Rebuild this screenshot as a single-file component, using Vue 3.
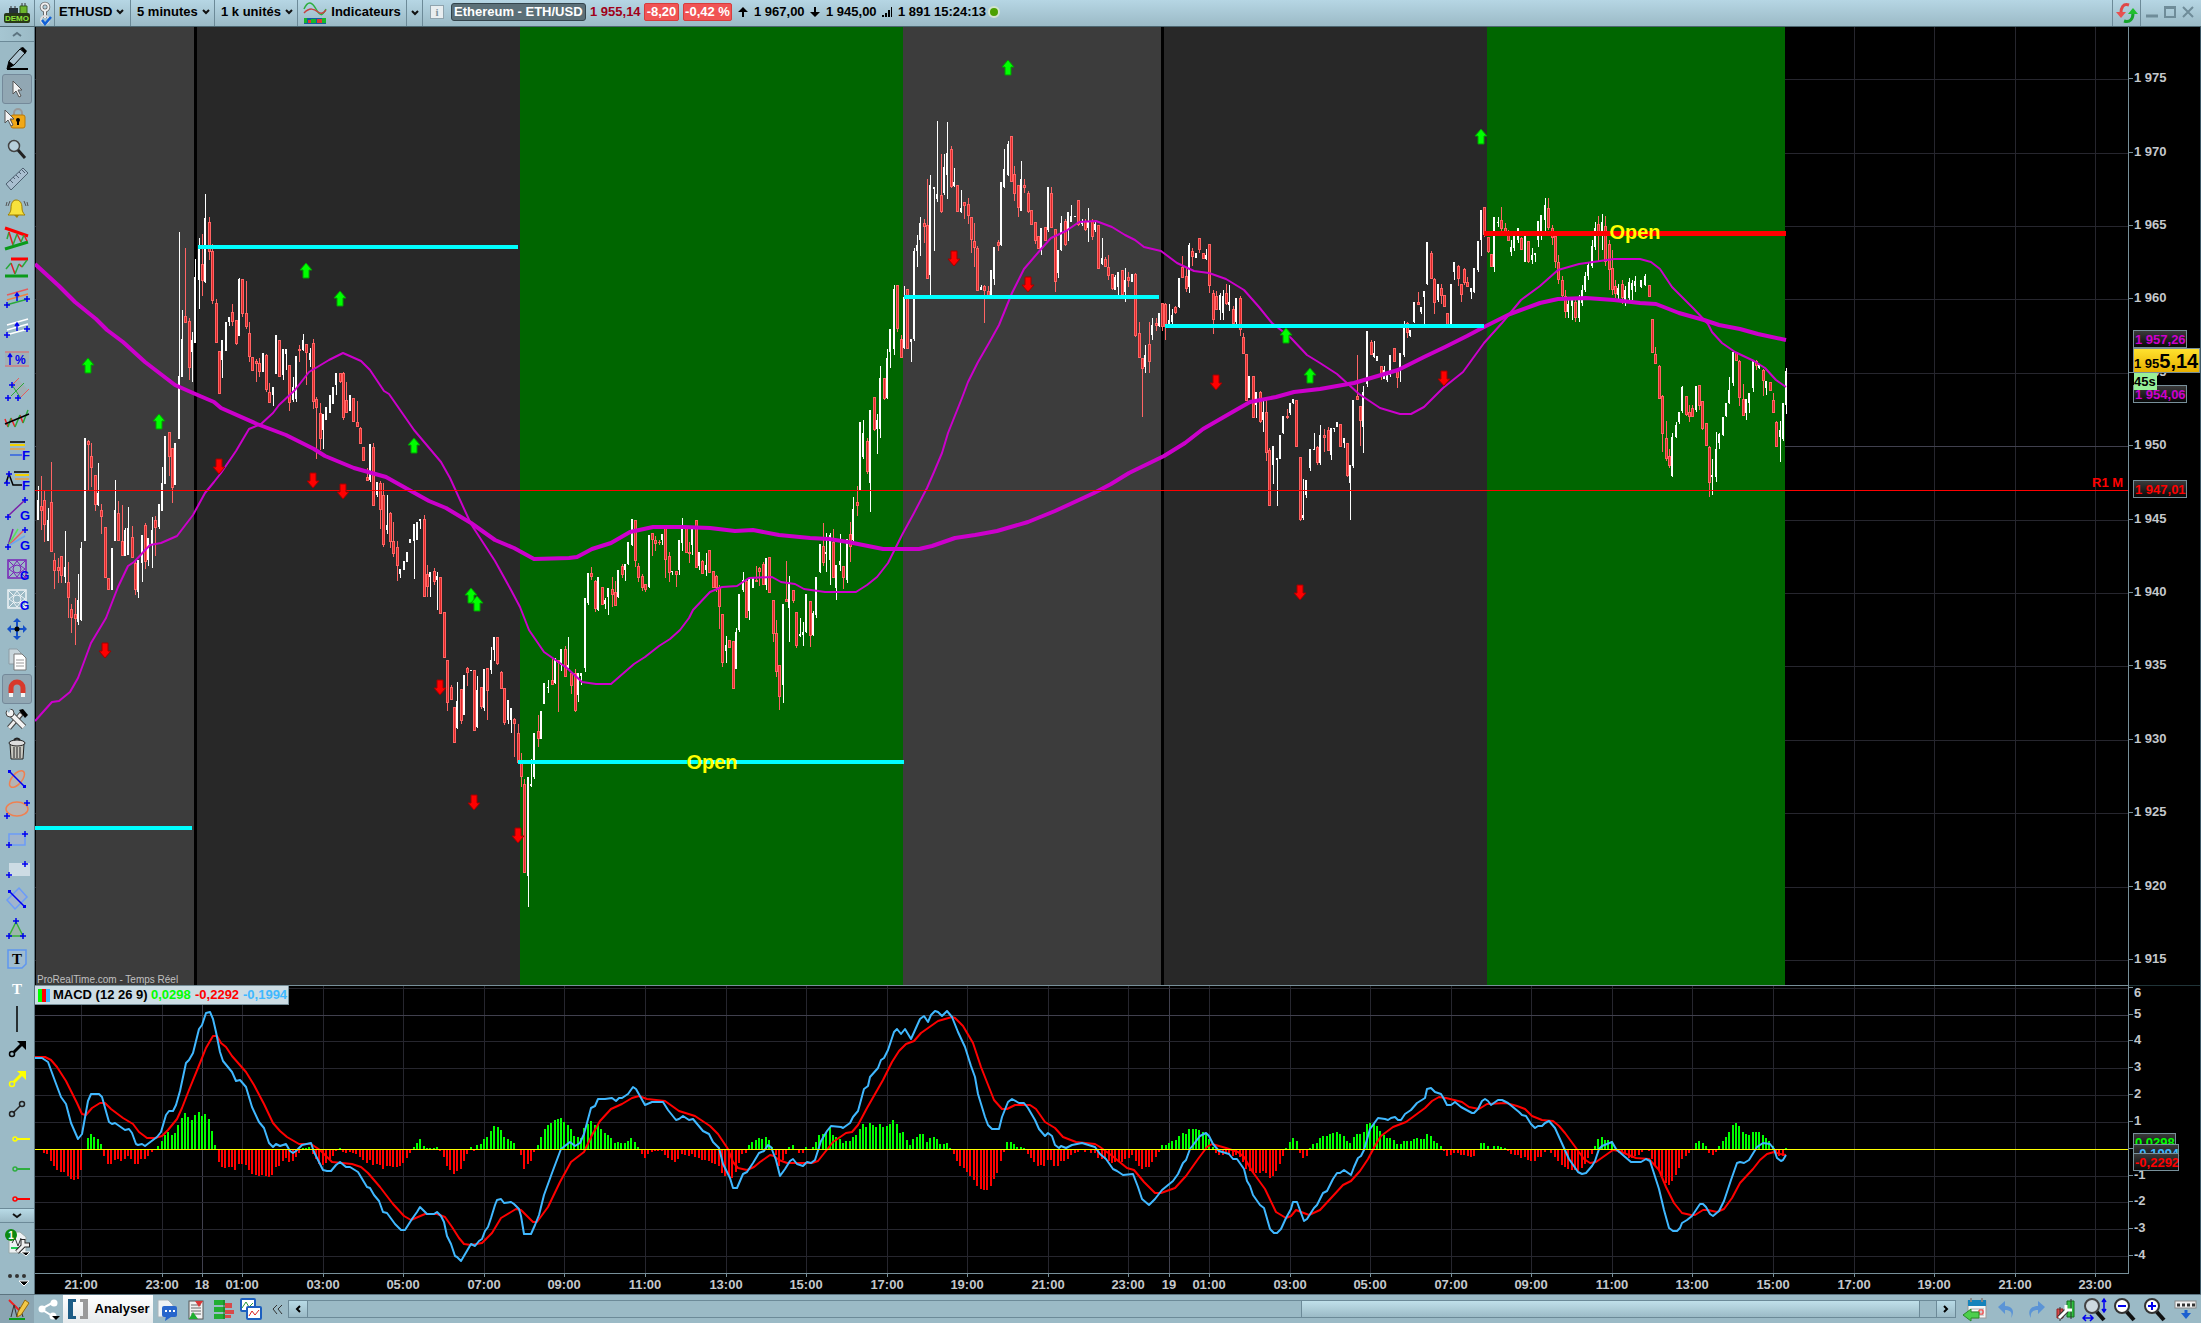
<script setup>
import { ref } from 'vue'

const symbol = ref('ETHUSD')
const timeframe = ref('5 minutes')
const units = ref('1 k unités')

/* ---------- drawing helpers for toolbar glyphs ---------- */
const plus = (x, y) => `<path d="M${x - 3} ${y}h6M${x} ${y - 3}v6" stroke="#0000f0" stroke-width="1.5"/>`
const line = (d, c = '#000', w = 1.5) => `<path d="${d}" stroke="${c}" stroke-width="${w}" fill="none"/>`
const letter = (t, x, y, c = '#0000f0', s = 13) =>
  `<text x="${x}" y="${y}" fill="${c}" font-size="${s}" font-weight="bold">${t}</text>`
const cursor = (x, y) =>
  `<path d="M${x} ${y}v13l3-3 3 6 2-1-3-6h4z" fill="#f4f4f4" stroke="#555"/>`
const gannBox = c =>
  `<rect x="5" y="5" width="18" height="18" fill="none" stroke="${c}" stroke-width="1.5"/>` +
  `<circle cx="14" cy="14" r="4" fill="none" stroke="${c}"/>` +
  `<path d="M6 6l5 5M22 6l-5 5M6 22l5-5M22 22l-5-5M14 6l-3 4M14 6l3 4M6 14l4-3M6 14l4 3M22 14l-4-3M22 14l-4 3M14 22l-3-4M14 22l3-4" stroke="${c}" fill="none"/>` +
  letter('G', 17, 25, '#0000f0', 12)
const hRay = c => `<circle cx="12" cy="14" r="2" fill="none" stroke="${c}" stroke-width="1.5"/>` + line('M14 14h13', c, 2)
const arrowTool = c =>
  `<circle cx="9" cy="19" r="2.5" fill="none" stroke="${c}" stroke-width="1.5"/>` +
  line('M11 17l8-8', c, 3) + `<path d="M14 6h9v9z" fill="${c}"/>`

const tools = [
  { name: 'Crayon', g: '<path d="M4 24l2-8L17 4l5 4L11 20z" fill="#a9c2cf" stroke="#000"/><path d="M4 24l2-8 5 4zM17 3l3-1 4 4-2 3z"/>' + line('M4 24h21', '#000', 2) },
  { name: 'Curseur', on: true, g: cursor(10, 6) },
  { name: 'Verrou', g: '<path d="M11 11V8a4 4 0 018 0v3" fill="none" stroke="#999" stroke-width="2"/><rect x="8" y="10" width="14" height="13" rx="2" fill="#f0a818" stroke="#b87808"/><circle cx="15" cy="15" r="2"/><path d="M14 15h2v5h-2z"/>' + cursor(2, 5) },
  { name: 'Loupe', g: '<circle cx="11" cy="11" r="5.5" fill="#b7d0dc" stroke="#444" stroke-width="1.5"/>' + line('M15 15l7 8', '#222', 3) },
  { name: 'Règle', g: '<path d="M3 19L20 3l5 5L8 25z" fill="#a9bfd0" stroke="#4d6070"/>' + line('M7 15l3 3M10 12l2 2M13 10l3 3M16 7l2 2M19 5l3 3', '#4d6070', 1) },
  { name: 'Alerte', g: '<path d="M13 5c4 0 6 3 6 8 0 3 1 5 3 7H5c2-2 3-4 3-7 0-5 2-8 5-8z" fill="#f7e23c" stroke="#a08000"/><path d="M11 20h5l-2 3z" fill="#a08000"/>' + line('M4 7L3 11M7 6L5 11M21 6l2 5M24 7l1 4', '#555', 1) },
  { name: 'Triangle', g: line('M2 3l23 8', '#f00', 3) + line('M2 24l23-7', '#0a9a1a', 3) + line('M4 14l2-7', '#2aa83a') + line('M6 7l4 13M14 9l4 8M21 10l3 6', '#d22') + line('M10 20l4-11M18 17l3-7', '#2aa83a') },
  { name: 'Canal prix', g: line('M8 4h17', '#f00', 3) + line('M2 21h23', '#0a9a1a', 3) + line('M8 8l4 11M16 9l3 3', '#d22') + line('M3 14l5-6M12 19l4-10M19 12l5-7', '#2aa83a') },
  { name: 'Canal haussier', g: line('M4 10l21-6', '#e65c5c') + line('M4 15l21-6', '#f08040') + line('M3 20l22-6', '#2aa83a') + line('M14 16V8M12 11l2-3 2 3', '#0000f0') + plus(4, 20) + plus(24, 14) },
  { name: 'Canal blanc', g: line('M4 10l21-6M4 15l21-6M3 20l22-6', '#fff', 1.5) + line('M14 16V8M12 11l2-3 2 3', '#0000f0') + plus(4, 20) + plus(24, 14) },
  { name: 'Variation', g: '<path d="M2 8h24v12H2z" fill="#a8a8a8" opacity=".5"/>' + line('M2 7h24M2 21h24', '#e65c5c', 1) + line('M7 20V9M5 12l2-3 2 3', '#0000f0') + letter('%', 12, 19, '#0000f0', 12) },
  { name: 'Fourchette', g: '<path d="M9 11l6-7 10 11-8 8z" fill="#a8a8a8" opacity=".5"/>' + line('M9 10l7-7M18 22l8-8', '#e65c5c', 1) + line('M8 21L21 8M9 10l8 12', '#2aa83a', 1) + plus(9, 10) + plus(5, 23) + plus(15, 23) },
  { name: 'Régression', g: line('M2 14l3 8M8 13l4 9M17 10l3 8', '#e22') + line('M5 22l3-9M12 22l5-12M20 18l5-13', '#2aa83a') + line('M2 19L26 9', '#000', 1.5) },
  { name: 'Retracements', g: line('M7 7h15') + line('M7 10h15', '#f0d000', 2) + line('M7 14h15', '#e8a040', 1.5) + line('M7 20h12', '#3060e0') + letter('F', 19, 25) },
  { name: 'Extensions', g: line('M11 7h15') + line('M12 10h14', '#f0d000', 2) + line('M12 14h14', '#e8a040', 1.5) + line('M3 18l3-9 4 11h9') + plus(6, 9) + plus(4, 18) + letter('F', 19, 25) },
  { name: 'Droite de Gann', g: line('M5 21L22 5', '#7a1fa8') + plus(22, 5) + plus(5, 22) + letter('G', 17, 25) },
  { name: 'Éventail', g: line('M5 21L10 4', '#7a1fa8') + line('M5 21L15 4', '#5adf5a') + line('M5 21L21 5', '#e65c5c') + line('M5 21l17-10', '#6aa8f0') + plus(22, 5) + plus(5, 22) + letter('G', 17, 25) },
  { name: 'Carré de Gann', g: gannBox('#7a22b8') },
  { name: 'Carré blanc', g: gannBox('#eef4f6') },
  { name: 'Déplacer', g: line('M14 6v16M6 14h16', '#1550c8', 2) + '<path d="M14 3l4 4h-8zM14 25l4-4h-8zM4 14l4-4v8zM24 14l-4-4v8z" fill="#1550c8"/><circle cx="14" cy="14" r="2.5"/>' },
  { name: 'Copier', g: '<path d="M6 4h8l4 4v11H6z" fill="#c9d6dc" stroke="#8c9ca4"/><path d="M11 9h8l4 4v12H11z" fill="#fff" stroke="#777"/>' + line('M13 15h8M13 18h8M13 21h8', '#999', 1) },
  { name: 'Aimant', on: true, g: '<path d="M8 18v-5a6 6 0 0112 0v5" fill="none" stroke="#d8392b" stroke-width="5"/>' + line('M8 18v4M20 18v4', '#f4f4f4', 4) },
  { name: 'Outils', g: line('M6 23L20 7', '#444', 5) + line('M6 23L18 9', '#eee', 3) + line('M8 9l13 13', '#444', 6) + line('M7 8l14 14', '#f2f2f2', 4) + '<path d="M16 5l4-1 5 6-3 3z"/><circle cx="7" cy="8" r="4" fill="#f2f2f2" stroke="#444"/><path d="M2 4l4 4 2-5z" fill="#9bb8c5"/>' },
  { name: 'Corbeille', g: '<path d="M7 9h14l-1 15H8z" fill="#c8c8c0" stroke="#222"/><ellipse cx="14" cy="8" rx="8" ry="3" fill="#ddd" stroke="#222"/><path d="M11 5q3-3 6 0" fill="none" stroke="#222" stroke-width="2"/>' + line('M11 12v11M14 12v11M17 12v11', '#555') },
  { name: 'Ellipse inclinée', g: '<ellipse cx="14" cy="14" rx="10" ry="5" transform="rotate(-50 14 14)" fill="#b4b4b4" stroke="#f08050" stroke-width="1.5"/>' + line('M7 7l14 14', '#0000f0') + '<path d="M5 5h3v3H5zM20 20h3v3h-3z" fill="#0000f0"/>' },
  { name: 'Ellipse', g: '<ellipse cx="14" cy="14" rx="11" ry="7" fill="#b4b4b4" stroke="#f08050" stroke-width="1.5"/>' + plus(24, 8) + plus(4, 21) },
  { name: 'Rectangle', g: '<rect x="6" y="9" width="16" height="11" fill="#a0b4cc" stroke="#6c9cf8" stroke-width="1.5"/>' + plus(22, 9) + plus(6, 20) },
  { name: 'Zone', g: '<rect x="6" y="8" width="21" height="13" fill="#cddce4"/>' + plus(22, 9) + plus(6, 20) },
  { name: 'Rectangle incliné', g: '<path d="M16 3l8 9-12 12-8-9z" fill="#a0b4cc" stroke="#6c9cf8" stroke-width="1.5"/>' + line('M7 7l14 14', '#0000f0') + '<path d="M5 5h3v3H5zM20 20h3v3h-3z" fill="#0000f0"/>' },
  { name: 'Forme', g: '<path d="M13 7l7 14H6z" fill="#9db5ad" stroke="#3ab03a" stroke-width="1.5"/>' + plus(13, 6) + plus(6, 21) + plus(20, 21) },
  { name: 'Note', g: '<path d="M5 5h18v14l-4 4H5z" fill="#9fbcd0" stroke="#5f96f0" stroke-width="1.5"/><text x="14" y="19" text-anchor="middle" font-family="Liberation Serif, serif" font-weight="bold" font-size="15">T</text>' },
  { name: 'Texte', g: '<text x="14" y="19" text-anchor="middle" fill="#fff" font-family="Liberation Serif, serif" font-weight="bold" font-size="15">T</text>' },
  { name: 'Verticale', g: line('M14 1v26') },
  { name: 'Flèche', g: arrowTool('#000') },
  { name: 'Flèche jaune', g: arrowTool('#ff0') },
  { name: 'Segment', g: line('M10 18l7-7', '#222') + '<circle cx="9" cy="19" r="2.5" fill="none" stroke="#222" stroke-width="1.5"/><circle cx="19" cy="9" r="2.5" fill="none" stroke="#222" stroke-width="1.5"/>' },
  { name: 'Horizontale jaune', g: hRay('#ff0') },
  { name: 'Horizontale verte', g: hRay('#2fae3f') },
  { name: 'Horizontale rouge', g: hRay('#f00') }
]

const demoIcon = '<path d="M8 7h9v6H8z" fill="#26323a"/><path d="M19 5h7v8h-7z" fill="#6cb52c" stroke="#33601a"/><path d="M10 5v3M14 5v3M21 2v3M24 2v3" stroke="#333"/><rect x="3" y="12" width="26" height="10" rx="2" fill="#283818"/><text x="16" y="20" text-anchor="middle" font-size="8" font-weight="bold" fill="#8ee33c">DEMO</text>'
const linkIcon = '<circle cx="9" cy="7" r="3.5" fill="none" stroke="#666" stroke-width="3.5"/><path d="M9 10v8" stroke="#666" stroke-width="4"/><circle cx="9" cy="7" r="3.5" fill="none" stroke="#f0f0f0" stroke-width="2"/><path d="M9 10v8" stroke="#f0f0f0" stroke-width="2"/><circle cx="9" cy="20" r="4" fill="none" stroke="#ddd" stroke-width="2"/><path d="M6 20l3 4 6-7" fill="none" stroke="#1060d8" stroke-width="2.5"/>'
const indicatorIcon = '<path d="M1 8C5-1 9 1 13 8s6 8 10 0" fill="none" stroke="#2fae3f" stroke-width="1.5"/><path d="M1 12c6-6 10-4 14-1s6 0 8-2" fill="none" stroke="#c84040" stroke-width="1.5"/><path d="M1 17h22v6H1z" fill="#1260a0"/><path d="M1 17h3v5H1zM8 18h5v4H8zM19 17h4v5h-4z" fill="#18b828"/><path d="M5 19h3v3H5zM14 18h5v4h-5z" fill="#e03838"/>'
const swapIcon = '<path d="M14 4C8 2 6 7 6 12" fill="none" stroke="#e04848" stroke-width="3"/><path d="M1 11h10l-5 6z" fill="#e85050"/><path d="M9 20c6 2 9-2 9-8" fill="none" stroke="#16a42c" stroke-width="3"/><path d="M13 13h10l-5-6z" fill="#1fbf2f"/>'

const bottomLeft = [
  { name: 'Graphique', w: 34, cls: 'pressed', g: '<path d="M6 3l12 12" stroke="#e22" stroke-width="2"/><path d="M8 20l3-12 3 12 3-10 3 10" stroke="#333" fill="none"/><path d="M6 22h16" stroke="#0a9a1a" stroke-width="2"/><path d="M15 15L22 3l4 3-8 12-4 2z" fill="#f2c848" stroke="#94690c"/>' },
  { name: 'Partager', w: 29, cls: '', g: '<path d="M19 5L6 12l13 8" fill="none" stroke="#fff" stroke-width="2"/><circle cx="19" cy="6" r="3.5" fill="#fff"/><circle cx="7" cy="12" r="3.5" fill="#fff"/><circle cx="18" cy="19" r="3.5" fill="#fff"/><path d="M17 19h8l-4 4z"/>' }
]
const bottomMid = [
  { name: 'Messages', w: 30, g: '<path d="M4 3h10l5 5v12H4z" fill="#eef2f4" stroke="#a8b4ba"/><rect x="8" y="9" width="15" height="11" rx="2" fill="#2866cc"/><path d="M12 19l-1 5 6-4z" fill="#2866cc"/><path d="M11 14h2M15 14h2M19 14h2" stroke="#fff" stroke-width="2"/>' },
  { name: 'Liste', w: 27, g: '<rect x="6" y="4" width="14" height="18" fill="#f2f2f2" stroke="#555"/><path d="M8 8h10M8 11h10M8 14h10M8 17h10" stroke="#666"/><path d="M12 4h8l-4 6z" fill="#d83838"/><path d="M6 22l4-7 5 7z" fill="#1fae2f"/>' },
  { name: 'Carnet', w: 28, g: '<path d="M4 3h11v5H4zM4 10h11v5H4zM4 17h11v5H4z" fill="#22ae32"/><path d="M15 6h7v5h-7zM15 13h9v4h-9zM15 18h6v3h-6z" fill="#d84a4a"/><path d="M14 3v19" stroke="#1c7024"/>' },
  { name: 'Graphiques', w: 28, g: '<rect x="3" y="2" width="14" height="12" rx="1" fill="#fff" stroke="#1c5fc0" stroke-width="2"/><path d="M4 11l4-6 3 5 4-4" stroke="#2a9a3a" fill="none"/><rect x="9" y="10" width="14" height="12" rx="1" fill="#fff" stroke="#1c5fc0" stroke-width="2"/><path d="M11 19l3-5 3 4 4-5" stroke="#d22" fill="none"/>' }
]
const lens = '<path d="M14 14l8 9" stroke="#111" stroke-width="4"/><circle cx="10" cy="9" r="7" fill="#fff" stroke="#333" stroke-width="2"/>'
const bottomRight = [
  { name: 'Calendrier', g: '<rect x="6" y="4" width="18" height="17" fill="#f7f7f7" stroke="#999"/><rect x="6" y="3" width="18" height="6" fill="#1583bb"/><path d="M9 1v4M20 1v4" stroke="#888" stroke-width="2"/><path d="M9 12h13M9 15h13M9 18h13" stroke="#aaa"/><path d="M17 13h4v4h-4z" fill="none" stroke="#e22"/><path d="M1 18l8-6v3h8v6H9v3z" fill="#4ccf4c" stroke="#2a8a2a"/>' },
  { name: 'Annuler', g: '<path d="M13 4v5c8 0 10 6 6 12 2-6-1-8-6-8v4L6 10z" fill="#5b94d6"/>' },
  { name: 'Rétablir', g: '<path d="M16 4v5C8 9 5 15 9 21c-1-6 2-8 7-8v4l7-7z" fill="#5b94d6"/>' },
  { name: 'Réglages', g: '<path d="M5 12h6v9H5z" fill="#d84848" stroke="#902020"/><path d="M15 4h7v16h-7z" fill="#30c040" stroke="#14701c"/><path d="M8 10v14M19 2v20" stroke="#333"/><path d="M7 21l8-8" stroke="#333" stroke-width="5"/><path d="M7 21l8-8M14 8v5h6" stroke="#fff" stroke-width="3" fill="none"/>' },
  { name: 'Zoom auto', g: '<path d="M14 14l8 9" stroke="#111" stroke-width="4"/><circle cx="10" cy="9" r="7" fill="#ccd8de" stroke="#444" stroke-width="2"/><path d="M22 3v11M20 5l2-3 2 3M20 12l2 3 2-3M1 21h10M4 18l-3 3 3 3M8 18l3 3-3 3" stroke="#0000f0" fill="none" stroke-width="1.5"/>' },
  { name: 'Zoom arrière', g: lens + '<path d="M6 9h8" stroke="#0000f0" stroke-width="2"/>' },
  { name: 'Zoom avant', g: lens + '<path d="M6 9h8M10 5v8" stroke="#0000f0" stroke-width="2"/>' },
  { name: 'Clavier', g: '<rect x="3" y="4" width="21" height="7" fill="#f2f2f2" stroke="#888"/><path d="M5 8h3M10 8h3M15 8h3M20 8h3" stroke="#333" stroke-width="3"/><path d="M14 13v4" stroke="#1c5fd0" stroke-width="3"/><path d="M9 16h10l-5 6z" fill="#1c5fd0"/>' }
]

/* ---------- chart data ---------- */
const sessions = [
  [36, 158, '#3c3c3c'], [197, 323, '#282828'], [520, 383, '#006600'],
  [903, 258, '#3c3c3c'], [1164, 323, '#282828'], [1487, 298, '#006600']
]

const prices = Array.from({ length: 13 }, (_, i) => ({ v: 1975 - 5 * i, y: Math.floor(79.7 + 73.4 * i) }))
const priceLabel = v => `1 ${v - 1000}`
const macdScale = Array.from({ length: 11 }, (_, i) => ({ v: 6 - i, y: Math.floor(988.2 + 26.84 * i) }))
const hours = Array.from({ length: 26 }, (_, i) => ({
  t: String((21 + 2 * i) % 24).padStart(2, '0') + ':00',
  x: Math.floor(81.5 + 80.57 * i)
}))
const days = [{ t: '18', x: 202 }, { t: '19', x: 1169 }]
const times = [...hours, ...days]

const levels = [
  [198, 518, 247], [35, 192, 828], [518, 904, 762], [904, 1159, 297], [1165, 1484, 326]
]

/* colour+x, high, body top, body bottom, low */
const candleData = `
w38 486 500 520 520,r41 476 506 511 530,r44 491 500 525 542,w48 508 520 541 541,r51 462 502 552 552,r54 553 560 571 589,
r58 558 567 571 583,r61 556 556 576 583,w65 531 567 577 583,r68 562 582 598 618,r71 604 609 618 633,r75 598 614 619 645,
w78 574 600 622 625,w81 542 548 620 621,w85 438 438 541 541,r88 440 441 445 490,r91 443 456 468 487,r95 475 475 505 511,
w98 463 493 505 506,r101 504 510 517 534,r105 527 527 578 578,r108 578 578 590 590,w112 548 548 590 590,w115 480 510 541 541,
r118 501 513 541 541,r122 505 541 556 556,w125 528 530 556 556,w128 507 528 555 555,r132 526 537 558 558,r135 560 563 590 595,
w138 560 560 592 598,w142 535 535 563 582,r145 523 525 562 569,w148 538 538 560 566,w152 517 530 545 568,r155 516 520 528 556,
w159 504 504 527 529,w162 467 483 511 511,w165 436 436 484 484,r169 432 432 457 476,r172 448 448 488 503,w175 443 443 485 485,
w179 232 376 439 439,w182 310 339 377 377,r185 248 316 323 323,r189 318 321 368 380,w192 332 340 352 382,w195 259 277 343 343,
w199 238 247 280 309,r202 234 264 281 296,w205 194 218 282 283,r209 217 222 252 260,r212 244 251 301 304,r216 299 303 343 343,
r219 351 351 394 394,w222 340 340 360 378,w226 322 322 351 351,w229 317 317 322 326,r232 304 312 322 326,r236 320 320 344 345,
w239 278 279 336 336,r242 279 279 314 317,r246 281 313 327 329,r249 322 333 357 362,r252 357 357 371 371,r256 359 361 364 382,
r259 358 363 372 377,w263 353 353 372 372,r266 354 355 390 392,r269 383 392 403 403,w273 387 387 395 406,w276 335 335 374 374,
r279 340 340 377 377,w283 349 349 375 380,w286 349 349 354 370,r289 365 365 403 411,w293 377 387 400 402,w296 356 356 399 402,
r299 345 349 351 362,w303 334 340 350 351,r306 344 344 353 385,w310 348 353 360 367,r313 339 343 402 409,r316 397 399 408 459,
r320 403 413 439 450,w323 414 414 430 449,w326 407 407 420 420,w330 395 395 413 413,w333 387 387 404 404,w336 373 373 385 395,
r340 373 373 382 383,r343 372 373 418 420,r346 382 400 413 413,w350 395 395 411 411,r353 398 398 422 422,r357 401 422 427 427,
r360 427 428 444 444,r363 447 447 461 461,r367 468 477 481 481,w370 444 444 480 482,r373 443 447 506 506,w377 482 482 495 497,
r380 481 483 510 529,r383 483 495 545 547,w387 495 525 530 534,r390 512 513 542 548,r393 522 541 554 557,r397 541 547 566 581,
w400 569 569 574 578,w404 561 561 570 570,w407 552 552 562 562,w410 539 539 543 543,w414 524 524 541 579,w417 522 522 540 540,
w420 519 519 521 529,r424 515 519 597 597,r427 565 574 587 597,w430 572 572 577 597,r434 568 571 582 585,w437 572 576 580 610,
r440 577 577 614 614,r444 612 612 658 658,r447 660 660 703 711,r451 685 687 700 700,r454 707 707 743 743,w457 682 701 728 729,
r461 689 689 721 724,w464 675 675 715 715,r467 667 668 673 686,w471 670 670 671 671,r474 670 670 731 731,w477 676 690 727 728,
r481 687 687 707 709,w484 669 669 708 711,r487 668 668 691 720,w491 647 660 670 674,w494 637 637 650 661,r497 637 637 664 665,
r501 671 672 689 689,r504 688 688 723 725,w508 700 700 720 724,w511 708 708 720 733,r514 718 719 724 757,r518 724 733 763 763,
r521 753 762 777 787,r524 779 784 873 873,w528 777 777 876 907,w531 759 784 786 787,w534 733 733 777 779,r538 715 731 739 747,
w541 711 711 739 739,w544 683 683 704 704,w548 680 687 688 693,r552 658 680 685 685,w555 658 660 683 684,r558 660 660 663 712,
w561 649 649 665 671,r565 646 649 677 677,w568 637 665 668 668,r571 672 673 686 694,r575 669 673 711 712,w578 673 673 695 702,
w581 673 673 676 685,w585 598 598 668 672,w588 573 573 603 605,r591 567 573 577 580,r595 580 581 609 612,w598 577 577 610 611,
r602 587 587 605 605,w605 598 600 604 609,w608 588 588 597 615,r612 577 589 595 607,r615 581 592 606 606,w618 570 570 597 598,
r622 564 566 575 578,w625 564 564 570 581,w628 542 542 564 565,w632 519 519 545 546,r635 520 520 561 567,r638 563 566 578 582,
r642 574 576 588 591,r645 584 584 590 592,w649 535 535 587 588,r652 533 533 540 556,r655 536 540 544 551,r659 540 542 543 545,
w662 534 534 540 545,r665 528 528 560 578,r669 552 556 573 582,w672 571 571 572 575,r676 571 571 575 587,w679 540 540 570 575,
w682 518 528 543 551,r686 528 528 553 553,r689 542 552 554 563,w692 527 527 545 555,r696 520 520 568 568,w699 552 552 566 570,
r702 560 561 574 574,w706 553 565 570 576,r709 550 550 573 573,r713 571 571 588 588,r716 575 576 588 592,r719 585 587 607 629,
r722 614 614 663 667,w726 636 645 651 663,r729 640 640 648 648,r733 641 641 689 689,w736 628 632 669 669,w739 594 594 630 632,
w743 572 580 590 592,r746 580 581 618 618,w749 579 579 611 620,w753 577 577 588 588,r756 566 580 582 582,r759 567 568 572 586,
r763 562 564 585 585,w766 558 558 585 590,r769 557 557 593 593,r773 600 600 634 642,r776 620 633 672 677,r779 665 665 697 710,
w783 604 604 685 703,r786 561 599 602 602,w789 576 583 608 642,r793 590 590 601 603,r796 612 612 646 648,w800 618 634 636 637,
w803 622 632 635 646,w806 594 594 632 633,r810 601 601 636 647,w813 611 613 635 636,w816 577 577 615 618,w820 544 544 572 573,
r823 523 546 563 566,w826 533 552 554 572,w830 533 535 560 585,r833 529 542 578 578,w836 565 565 588 600,w840 534 561 565 571,
r843 566 566 578 589,w847 539 539 580 583,r850 522 534 547 562,w853 497 509 540 541,r857 486 502 506 516,w860 422 422 490 490,
w863 420 433 457 459,r867 438 441 472 474,w870 410 410 483 512,r874 397 397 430 431,w877 414 420 429 454,w880 366 378 429 438,
r884 378 378 399 400,w887 349 358 398 399,w890 329 329 352 368,w894 285 289 349 355,r897 285 285 329 332,r901 335 339 358 358,
w904 286 297 348 349,r907 289 289 349 349,w911 339 339 342 362,w914 248 251 339 341,w917 235 245 251 267,w920 217 223 240 256,
r924 219 223 227 243,r927 179 225 279 279,w930 175 185 275 295,w934 187 187 189 251,w937 121 194 199 202,r941 154 195 212 213,
w944 154 167 193 195,w947 122 153 175 199,r951 146 149 187 188,w954 168 182 186 187,r957 185 185 212 212,w961 190 208 212 213,
r964 202 202 206 219,r968 198 204 216 224,r971 217 217 240 253,r974 223 241 248 267,r977 246 248 291 291,w981 285 287 290 290,
r984 285 286 291 323,r988 286 291 299 299,w991 270 270 295 297,w994 247 247 279 285,r998 240 242 246 251,w1001 182 182 245 246,
w1004 149 169 187 188,w1008 141 144 175 176,r1011 136 136 182 182,r1014 166 174 194 201,r1018 185 185 208 217,w1021 161 179 211 211,
r1024 179 185 188 193,r1028 191 193 212 213,r1031 210 210 225 225,r1035 222 222 241 244,r1038 236 236 249 249,w1041 228 228 250 255,
r1045 227 227 241 241,w1048 187 187 230 232,r1051 187 193 228 228,r1055 229 229 282 292,w1058 250 250 273 278,w1061 216 223 250 251,
r1065 219 221 245 246,w1068 212 212 230 241,w1071 205 216 222 222,w1075 216 216 217 217,r1078 200 200 225 226,w1082 219 222 224 226,
r1085 219 221 230 231,w1088 208 221 228 242,r1092 219 221 237 240,w1095 221 224 230 232,r1098 225 225 269 269,w1102 238 258 264 265,
r1105 257 259 267 267,r1108 255 267 276 280,r1112 274 274 289 290,w1115 275 277 290 290,w1118 272 272 287 295,r1122 270 270 295 296,
w1125 268 280 292 302,r1128 272 277 281 287,w1132 274 274 282 282,r1135 273 274 336 337,r1139 322 333 358 358,r1142 358 358 369 417,
w1145 345 355 367 373,r1149 322 344 362 373,w1152 318 325 335 340,r1156 318 323 326 331,w1159 313 313 326 327,r1162 303 303 327 331,
r1165 303 304 327 340,w1169 304 320 325 325,w1172 309 315 322 325,r1175 306 307 313 314,w1179 278 278 307 308,r1182 256 267 278 278,
r1186 267 276 289 292,w1189 243 245 287 293,r1192 248 251 257 266,w1196 253 253 258 258,r1199 238 238 250 253,r1203 253 253 259 259,
w1206 249 255 259 260,r1209 244 244 286 293,r1213 290 293 320 334,r1216 291 296 310 310,w1220 293 295 310 320,w1223 290 296 313 320,
r1226 284 293 304 305,w1229 285 302 305 311,r1233 306 309 324 324,w1236 298 298 322 327,r1240 296 298 330 336,r1243 333 337 354 354,
r1246 354 354 401 401,w1249 376 376 398 398,r1253 376 376 418 418,w1256 392 392 405 418,r1260 391 392 422 423,w1263 400 412 420 432,
r1266 400 412 453 461,r1269 448 450 506 506,w1273 446 446 465 484,w1277 458 458 460 506,w1280 435 435 459 459,w1283 416 416 433 434,
r1287 409 416 418 419,w1290 403 403 413 415,w1293 399 399 403 404,r1296 400 400 447 447,r1300 457 457 520 521,w1303 479 515 518 520,
w1306 480 480 495 498,w1310 449 449 468 471,w1314 433 449 450 450,r1317 446 447 463 465,w1320 425 435 463 465,r1324 429 435 438 452,
r1328 427 430 451 451,w1331 428 428 455 460,w1334 428 428 429 432,w1337 422 422 427 427,r1340 424 424 447 447,w1344 438 438 443 448,
r1347 443 443 476 477,w1350 465 465 483 520,w1353 400 400 466 468,r1357 355 396 400 400,r1360 406 406 421 446,w1363 386 392 427 453,
w1367 331 331 384 387,r1371 340 342 355 355,w1374 341 353 357 358,w1377 356 356 361 361,r1381 366 366 374 380,w1384 366 370 379 379,
w1387 373 373 380 382,w1390 355 355 375 377,r1394 348 348 362 362,r1397 371 371 378 388,w1400 353 353 370 382,w1404 321 325 355 357,
r1407 322 323 333 338,w1410 330 330 336 337,w1414 302 302 322 323,r1418 292 302 305 305,w1421 307 307 312 314,w1424 291 291 297 325,
w1427 242 242 284 285,r1431 251 253 279 279,r1434 278 279 303 314,w1438 284 284 300 302,r1441 284 288 296 304,r1444 295 295 307 307,
r1447 313 313 325 325,w1451 284 284 325 325,w1454 262 262 272 280,r1458 265 266 279 286,r1461 284 284 295 302,r1464 268 269 283 285,
r1467 277 282 287 287,w1471 288 288 292 299,w1474 268 268 292 293,w1478 241 241 270 272,w1481 210 210 240 256,r1484 207 207 235 237,
r1488 237 237 252 253,r1491 254 254 267 267,w1494 217 217 267 272,w1498 217 222 223 227,r1501 207 220 229 232,r1505 223 228 232 232,
r1508 230 231 241 241,w1511 240 247 252 256,w1514 236 236 248 251,w1518 228 228 240 243,r1521 237 238 250 250,w1525 234 234 262 262,
r1528 241 241 262 263,w1532 248 255 260 264,w1535 253 253 255 262,w1538 221 221 240 247,w1541 215 215 235 240,w1545 198 205 220 232,
r1548 198 208 228 230,r1552 225 228 238 245,r1555 234 236 262 268,r1558 255 262 280 284,r1562 276 280 296 300,r1565 290 296 312 318,
w1568 300 304 312 318,w1572 298 300 306 320,r1575 298 302 318 322,w1579 295 300 318 322,w1582 285 290 303 306,w1585 272 276 290 292,
w1588 262 265 276 280,w1592 240 246 266 268,w1595 222 228 247 250,r1598 216 224 236 262,w1602 214 222 236 250,r1605 216 226 262 266,
r1609 240 244 270 290,r1612 250 268 290 295,r1615 280 286 294 298,w1618 284 288 295 302,r1622 280 284 298 304,w1625 286 290 300 306,
w1629 278 282 298 302,w1632 280 283 290 300,w1635 276 281 286 292,w1641 280 280 287 288,w1645 274 276 285 286,r1649 285 285 297 297,
r1652 319 319 353 353,r1655 347 354 364 364,r1659 365 366 399 399,r1662 395 396 434 452,r1666 421 438 459 461,r1669 449 456 466 468,
w1672 433 437 476 477,w1676 422 425 437 438,w1679 412 412 422 424,w1682 386 387 411 413,r1686 396 396 415 416,r1689 405 412 417 422,
r1692 405 408 417 417,w1696 386 386 410 412,r1699 385 385 406 410,r1702 401 401 429 430,r1706 423 423 446 446,r1709 446 447 483 497,
w1712 459 475 477 495,w1716 432 449 477 482,w1719 433 434 443 449,w1723 417 417 435 436,w1726 403 403 416 417,w1729 377 390 403 404,
w1733 352 352 383 386,r1736 352 352 361 361,r1739 360 361 398 406,r1743 384 399 416 416,w1746 399 399 413 420,w1749 393 393 403 413,
w1753 360 360 388 392,r1756 360 361 366 370,w1759 364 365 368 369,r1763 369 370 381 396,w1766 381 381 388 395,r1770 382 382 391 391,
r1773 393 400 413 413,r1776 421 422 447 447,w1780 421 430 437 462,w1783 403 403 439 441,w1786 368 371 405 414`

const paths = { whiteWick: '', whiteBody: '', redWick: '', redBody: '', redCore: '' }
for (const row of candleData.trim().split(/,\s*/)) {
  const [x, h, t, b, l] = row.slice(1).split(' ').map(Number)
  const body = Math.max(b - t, 1)
  if (row[0] === 'w') {
    paths.whiteWick += `M${x} ${h}h1V${Math.max(l, h + 1)}h-1z`
    paths.whiteBody += `M${x - 1} ${t}h2v${body}h-2z`
  } else {
    paths.redWick += `M${x} ${h}h1V${Math.max(l, h + 1)}h-1z`
    paths.redBody += `M${x - 1} ${t}h3v${body}h-3z`
    if (body > 2) paths.redCore += `M${x} ${t + 1}h1v${body - 2}h-1z`
  }
}

const maSlow = '35,264 59,286 75,302 96,319 107,330 123,342 145,362 175,385 193,393 214,402 221,408 257,424 286,435 314,449 325,456 354,468 386,477 411,491 429,501 446,508 471,523 495,540 514,548 534,559 569,558 577,557 592,549 611,543 630,532 653,527 684,527 710,528 735,531 753,530 779,535 810,538 829,539 848,542 883,549 919,549 932,546 955,538 975,535 997,531 1028,522 1055,511 1094,493 1111,484 1129,473 1164,456 1185,443 1203,429 1229,414 1250,402 1276,397 1294,392 1320,389 1354,383 1398,370 1424,357 1445,347 1467,336 1484,327 1510,314 1540,303 1558,299 1586,298 1614,300 1640,303 1656,304 1679,313 1704,320 1719,325 1740,329 1758,334 1786,340'
const maFast = '35,721 43,712 52,702 59,701 70,692 78,678 81,670 91,643 106,618 118,587 128,566 134,562 150,545 161,543 177,536 193,515 205,493 214,482 221,473 236,451 249,429 261,424 273,413 279,405 295,390 309,372 329,360 343,353 361,361 370,370 384,391 389,394 414,430 441,462 450,478 471,524 495,561 511,590 520,607 529,630 544,652 567,668 582,682 596,684 611,684 634,664 645,657 659,646 670,639 680,630 689,618 693,610 710,592 722,587 737,586 749,578 772,577 781,582 795,584 804,589 825,592 856,592 867,585 877,577 888,563 902,535 914,513 927,488 934,472 942,453 948,433 962,398 968,382 978,362 989,343 999,325 1012,293 1024,269 1042,248 1051,238 1066,231 1079,222 1096,221 1112,227 1125,235 1135,240 1144,247 1161,251 1177,263 1194,271 1209,273 1226,279 1244,290 1259,307 1272,323 1291,338 1307,355 1320,363 1337,374 1359,394 1380,408 1400,414 1411,414 1424,407 1443,388 1463,372 1484,343 1502,323 1521,300 1540,286 1558,270 1579,264 1614,259 1640,259 1651,262 1660,269 1672,287 1694,309 1708,324 1712,332 1722,343 1735,352 1754,361 1765,368 1776,380 1786,387'
const macdLine = '35,1058 42,1058 48,1062 55,1081 61,1097 66,1104 71,1123 78,1139 82,1134 88,1101 91,1094 99,1094 102,1097 109,1122 112,1124 115,1123 125,1130 129,1129 132,1133 136,1144 138,1145 142,1144 145,1146 157,1137 161,1132 166,1115 169,1111 173,1111 176,1105 180,1091 186,1063 189,1060 193,1053 199,1029 202,1025 206,1013 210,1012 213,1019 216,1032 220,1052 223,1061 232,1072 236,1081 240,1080 246,1087 252,1107 259,1122 264,1128 269,1143 273,1147 276,1144 280,1146 286,1144 290,1151 293,1153 296,1151 302,1145 311,1143 314,1152 323,1170 327,1171 331,1171 336,1165 340,1162 346,1167 350,1167 358,1172 367,1187 370,1188 374,1195 379,1201 383,1212 387,1213 395,1224 401,1230 405,1230 412,1219 417,1212 420,1207 427,1214 434,1214 437,1212 441,1216 444,1222 447,1236 451,1244 455,1256 457,1257 461,1261 471,1244 475,1246 479,1241 482,1239 485,1231 488,1227 491,1218 495,1205 497,1200 501,1199 504,1203 511,1202 514,1204 519,1209 521,1216 524,1234 531,1234 535,1225 539,1215 544,1195 552,1173 561,1149 570,1142 575,1146 580,1143 584,1134 591,1108 595,1106 598,1099 605,1099 612,1098 616,1101 619,1098 622,1098 628,1094 633,1087 636,1089 645,1105 652,1102 663,1102 668,1110 676,1120 679,1119 683,1116 689,1120 693,1119 703,1131 709,1134 713,1142 719,1148 723,1164 730,1178 733,1188 737,1188 743,1174 747,1172 753,1163 759,1153 764,1151 768,1145 771,1147 776,1160 780,1176 785,1169 790,1161 793,1159 797,1164 803,1166 807,1162 811,1163 815,1160 821,1141 827,1131 831,1126 841,1127 843,1128 850,1123 853,1117 858,1111 864,1089 868,1086 870,1077 878,1068 881,1060 884,1058 888,1050 894,1032 897,1029 901,1034 905,1029 911,1039 920,1019 924,1016 928,1022 931,1015 935,1011 938,1012 942,1016 947,1011 952,1017 958,1032 965,1047 971,1066 975,1077 978,1094 985,1117 988,1125 992,1129 999,1129 1002,1117 1008,1102 1012,1099 1019,1103 1024,1103 1028,1108 1035,1120 1039,1129 1045,1136 1048,1133 1052,1136 1055,1145 1059,1148 1061,1146 1066,1148 1072,1145 1082,1143 1095,1147 1100,1154 1106,1159 1113,1169 1117,1171 1123,1175 1133,1174 1138,1187 1142,1199 1149,1205 1155,1199 1162,1190 1173,1181 1178,1174 1183,1163 1186,1160 1190,1149 1200,1136 1206,1133 1209,1136 1213,1144 1219,1151 1229,1154 1233,1159 1237,1159 1244,1169 1247,1181 1250,1186 1253,1195 1260,1205 1264,1208 1270,1229 1274,1233 1277,1233 1281,1229 1286,1218 1291,1209 1293,1202 1297,1202 1304,1221 1307,1219 1314,1208 1317,1205 1323,1193 1327,1191 1333,1179 1337,1173 1340,1173 1344,1170 1351,1175 1354,1167 1358,1158 1361,1156 1364,1150 1370,1129 1378,1118 1385,1119 1388,1120 1391,1118 1395,1117 1398,1120 1401,1120 1405,1114 1411,1110 1417,1103 1425,1098 1427,1089 1431,1088 1435,1092 1441,1094 1444,1099 1447,1105 1451,1105 1455,1102 1461,1107 1472,1113 1474,1113 1478,1109 1482,1101 1485,1099 1488,1101 1491,1105 1498,1100 1502,1100 1508,1103 1519,1112 1522,1115 1526,1116 1531,1124 1535,1128 1538,1126 1542,1126 1545,1123 1549,1121 1555,1128 1564,1148 1569,1159 1578,1172 1582,1174 1586,1173 1592,1166 1595,1161 1599,1149 1602,1146 1612,1142 1616,1149 1624,1156 1631,1162 1641,1162 1646,1159 1650,1161 1659,1189 1664,1210 1669,1228 1673,1231 1677,1231 1680,1228 1682,1223 1687,1220 1692,1216 1700,1204 1703,1204 1706,1207 1710,1214 1713,1216 1719,1211 1724,1201 1731,1180 1737,1163 1740,1162 1744,1163 1749,1160 1757,1147 1763,1143 1770,1144 1774,1149 1777,1158 1781,1161 1783,1160 1786,1155'
const signalLine = '35,1057 45,1057 51,1060 57,1067 66,1081 77,1103 82,1114 86,1115 92,1108 100,1103 105,1103 111,1109 123,1118 133,1124 139,1132 147,1138 155,1138 162,1136 168,1130 177,1119 182,1108 189,1090 200,1063 206,1048 213,1036 217,1036 221,1043 226,1047 232,1056 246,1072 254,1085 264,1104 273,1123 280,1131 287,1137 299,1144 311,1144 320,1150 332,1162 352,1164 361,1167 368,1173 380,1187 393,1204 404,1216 411,1220 418,1217 425,1214 437,1214 445,1217 452,1227 459,1238 464,1244 471,1245 482,1243 492,1233 501,1218 511,1212 516,1209 521,1210 528,1217 533,1222 537,1222 548,1207 560,1182 571,1162 584,1152 592,1135 600,1121 611,1109 622,1104 632,1098 639,1096 647,1099 665,1101 679,1111 695,1116 710,1126 718,1134 728,1149 733,1162 738,1168 747,1170 754,1167 760,1162 770,1155 774,1156 779,1160 787,1163 799,1163 812,1163 818,1161 833,1142 846,1133 852,1132 858,1125 867,1108 883,1080 892,1062 899,1051 906,1044 914,1041 921,1033 938,1021 952,1017 955,1018 963,1026 973,1043 981,1067 994,1100 1002,1109 1007,1109 1015,1105 1030,1105 1036,1109 1045,1122 1055,1128 1063,1137 1076,1142 1095,1144 1100,1147 1111,1155 1127,1168 1134,1170 1144,1182 1155,1193 1161,1193 1175,1188 1186,1176 1198,1159 1207,1147 1212,1144 1226,1148 1238,1152 1244,1157 1252,1171 1265,1189 1276,1212 1286,1218 1291,1216 1296,1210 1309,1215 1320,1210 1332,1197 1343,1185 1351,1181 1360,1171 1368,1159 1376,1144 1381,1136 1393,1127 1406,1122 1425,1108 1432,1101 1439,1097 1446,1098 1462,1102 1469,1107 1479,1109 1487,1104 1506,1103 1517,1106 1525,1109 1532,1116 1542,1120 1553,1121 1559,1126 1565,1133 1576,1148 1584,1159 1590,1163 1596,1162 1603,1157 1613,1150 1619,1151 1636,1158 1649,1159 1659,1170 1666,1187 1674,1203 1682,1213 1691,1215 1695,1215 1703,1210 1708,1210 1717,1212 1724,1209 1732,1198 1740,1183 1753,1169 1760,1160 1767,1154 1774,1152 1780,1154 1786,1155'

/* histogram: first bar position, last bar position, signed heights */
const histogramData = [
  [44, 558, '-3 -4 -11 -16 -20 -22 -22 -26 -29 -30 -29 -20 0 11 15 12 10 5 -6 -14 -14 -10 -9 -11 -9 -6 -9 -14 -14 -9 -9 -6 -2 0 3 8 14 17 14 16 24 31 36 32 29 34 37 33 35 30 18 4 -12 -17 -18 -17 -17 -20 -14 -14 -15 -20 -24 -25 -26 -25 -26 -27 -25 -17 -16 -11 -8 -12 -11 -7 -3 1 1 2 -4 -9 -14 -15 -13 -9 -6 -1 1 -2 -3 -2 -3 -4 -7 -10 -13 -10 -15 -14 -15 -19 -16 -16 -17 -17 -16 -13 -8 -3 2 6 10 3 1 1 1 2 -1 -7 -16 -20 -24 -21 -19 -11 -4 2 -1 4 5 10 12 18 23 22 19 12 10 8 6 0 -5 -19 -14 -11 -2 4 12 20 24 26 29 30'],
  [561, 1098, '31 27 24 20 13 12 11 21 25 28 24 25 20 16 14 11 6 7 6 6 8 11 7 2 -4 -8 -4 -2 -1 -1 -1 -5 -8 -10 -12 -9 -4 -5 -6 -4 -7 -8 -10 -10 -11 -13 -14 -16 -23 -26 -25 -28 -22 -13 -4 -3 4 7 9 11 10 12 9 2 -5 -16 -10 -4 2 4 0 -3 -3 2 0 2 7 14 15 17 22 14 12 10 6 8 8 12 14 20 25 22 26 24 22 25 22 23 25 29 25 16 17 9 4 10 12 15 15 7 11 12 10 5 5 6 1 -4 -11 -16 -18 -22 -26 -30 -36 -39 -40 -40 -36 -29 -23 -11 -2 7 7 5 2 2 1 -4 -8 -12 -16 -15 -16 -10 -10 -16 -16 -11 -11 -9 -5 -3 -2 0 -2 0 -3 -3 -8'],
  [1102, 1689, '-9 -9 -11 -13 -12 -12 -12 -9 -8 -5 -11 -16 -19 -17 -17 -12 -7 -2 4 4 6 8 9 13 16 15 20 20 20 19 17 15 10 2 -3 -5 -5 -4 -4 -6 -5 -7 -12 -19 -21 -23 -23 -23 -21 -23 -28 -26 -21 -14 -6 1 7 11 8 -3 -8 -6 1 5 6 11 13 13 15 16 17 15 13 8 6 12 15 15 17 25 26 25 23 18 14 11 11 9 5 5 8 8 8 10 11 10 10 15 13 8 6 3 -1 -6 -5 -3 -3 -5 -5 -6 -7 -6 0 6 6 3 0 3 3 2 1 -1 -4 -5 -5 -8 -7 -10 -11 -11 -7 -7 -2 0 -3 -7 -11 -15 -17 -19 -20 -20 -21 -18 -14 -8 -4 3 10 12 9 9 8 -1 -3 -3 -4 -8 -8 -6 -5 -2 0 -1 -9 -15 -21 -28 -33 -35 -31 -25 -18 -9 -6 -3'],
  [1696, 1786, '6 8 6 3 -3 -5 -2 3 8 12 17 24 26 23 17 15 14 17 17 17 14 11 8 3 -3 -6 -6 1']
]
let histUp = ''
let histDown = ''
for (const [from, to, text] of histogramData) {
  const values = text.split(' ').map(Number)
  values.forEach((v, i) => {
    const x = Math.round(from + ((to - from) * i) / (values.length - 1)) - 1
    if (v > 0) histUp += `M${x} 1149h2v${-v}h-2z`
    if (v < 0) histDown += `M${x} 1150h2v${-v}h-2z`
  })
}

const upArrows = [[306, 263], [340, 291], [88, 358], [159, 414], [414, 438], [471, 588], [477, 596], [1008, 60], [1286, 328], [1310, 368], [1481, 129]]
const downArrows = [[219, 459], [313, 473], [343, 484], [105, 643], [440, 680], [474, 795], [518, 828], [954, 251], [1028, 277], [1216, 375], [1444, 371], [1300, 585]]

const tags = [
  { y: 330, w: 54, t: '1 957,26', c: '#cc00cc' },
  { y: 385, w: 54, t: '1 954,06', c: '#cc00cc' },
  { y: 480, w: 54, t: '1 947,01', c: '#ff0000' },
  { y: 1133, w: 43, t: '0,0298', c: '#00ff00' },
  { y: 1144, w: 46, t: '-0,1994', c: '#40b8ff' },
  { y: 1153, w: 46, t: '-0,2292', c: '#ff0000' }
]
</script>

<template>
  <div class="app">
    <header class="topbar">
      <button class="cell demo" aria-label="Compte démo"><svg width="32" height="24" v-html="demoIcon" /></button>
      <button class="cell link" aria-label="Lier"><svg width="18" height="26" v-html="linkIcon" /></button>
      <label class="cell pick pick-symbol">
        <select v-model="symbol" aria-label="Valeur"><option>ETHUSD</option></select>
        <svg class="chev" viewBox="0 0 8 6"><path d="M1 1l3 3 3-3" /></svg>
      </label>
      <label class="cell pick pick-time">
        <select v-model="timeframe" aria-label="Unité de temps"><option>5 minutes</option></select>
        <svg class="chev" viewBox="0 0 8 6"><path d="M1 1l3 3 3-3" /></svg>
      </label>
      <label class="cell pick pick-units">
        <select v-model="units" aria-label="Nombre d'unités"><option>1 k unités</option></select>
        <svg class="chev" viewBox="0 0 8 6"><path d="M1 1l3 3 3-3" /></svg>
      </label>
      <button class="cell indicators"><svg width="24" height="24" v-html="indicatorIcon" /><span>Indicateurs</span></button>
      <button class="cell more" aria-label="Plus d'indicateurs"><svg class="chev" viewBox="0 0 8 6"><path d="M1 1l3 3 3-3" /></svg></button>
      <div class="quote">
        <button class="info" aria-label="Informations">i</button>
        <span class="instrument">Ethereum - ETH/USD</span>
        <span class="last">1 955,14</span>
        <span class="drop">-8,20</span>
        <span class="drop wide">-0,42 %</span>
        <svg width="10" height="10" class="dir"><path d="M5 0l5 5H6v5H4V5H0z" /></svg>
        <span class="stat">1 967,00</span>
        <svg width="10" height="10" class="dir"><path d="M5 10l5-5H6V0H4v5H0z" /></svg>
        <span class="stat">1 945,00</span>
        <svg width="10" height="10" class="dir"><path d="M0 8h2v2H0zM3 6h2v4H3zM6 3h2v7H6zM9 0h1v10H9z" /></svg>
        <span class="volume">1 891</span>
        <span class="clock">15:24:13</span>
        <i class="dot"></i>
      </div>
      <button class="cell swap" aria-label="Synchroniser"><svg width="24" height="24" v-html="swapIcon" /></button>
      <div class="win">
        <button aria-label="Réduire"><svg width="12" height="12"><path d="M0 10h12" stroke-width="3" /></svg></button>
        <button aria-label="Agrandir"><svg width="12" height="12"><path d="M1 1h10v10H1zM1 2h10" stroke-width="2" /></svg></button>
        <button aria-label="Fermer"><svg width="12" height="12"><path d="M1 1l10 10M11 1L1 11" stroke-width="2" /></svg></button>
      </div>
    </header>

    <div class="body">
      <nav class="side">
        <button class="fold" aria-label="Défiler vers le haut"><svg width="10" height="6"><path d="M1 5l4-3 4 3" stroke="#5c7480" stroke-width="2" fill="none" /></svg></button>
        <div class="tools">
          <button v-for="t in tools" :key="t.name" :class="['tool', { on: t.on }]" :aria-label="t.name">
            <svg width="28" height="28" v-html="t.g" />
          </button>
        </div>
        <button class="fold low" aria-label="Défiler vers le bas"><svg width="10" height="6"><path d="M1 1l4 3 4-3" stroke="#111" stroke-width="2" fill="none" /></svg></button>
        <button class="config" aria-label="Configuration">
          <svg width="28" height="32">
            <path d="M6 4h11l6 5v16H6z" fill="#eef2f4" stroke="#9aa" />
            <path d="M9 15l3-5 3 8 3-8" stroke="#333" fill="none" />
            <path d="M8 20h9" stroke="#2c5" stroke-width="2" />
            <path d="M14 24l8-8M20 11v6h7" stroke="#222" stroke-width="5" fill="none" />
            <path d="M14 24l8-8M20 12v5h6" stroke="#eee" stroke-width="3" fill="none" />
            <path d="M18 24h9l-4 4z" stroke="#fff" />
            <circle cx="8" cy="7" r="6" fill="#0c8a10" />
            <text x="8" y="11" text-anchor="middle" fill="#fff" font-size="10" font-weight="bold">1</text>
          </svg>
        </button>
        <button class="dots" aria-label="Plus d'outils">
          <svg width="28" height="20">
            <circle cx="7" cy="6" r="2" fill="#333" /><circle cx="14" cy="6" r="2" fill="#333" /><circle cx="21" cy="6" r="2" fill="#333" />
            <path d="M16 11h10l-5 5z" stroke="#fff" />
          </svg>
        </button>
      </nav>

      <svg class="chart" viewBox="35 27 2166 1267" role="img" aria-label="ETHUSD 5 minutes">
        <rect x="35" y="27" width="2166" height="1267" fill="#000" />
        <g class="crisp">
          <path v-for="t in hours" :key="t.t + t.x" :d="`M${t.x} 27h1V1273h-1z`" fill="#26262e" />
          <path v-for="t in days" :key="t.t" :d="`M${t.x} 27h1V1273h-1z`" fill="#40404e" />
          <path v-for="p in prices" :key="p.v" :d="`M35 ${p.y}H2128v1H35z`" :fill="p.v === 1950 ? '#40404e' : '#26262e'" />
          <path v-for="m in macdScale" :key="m.v" :d="`M35 ${m.y}H2128v1H35z`" :fill="m.v === 5 ? '#40404e' : '#26262e'" />
          <rect x="194" y="27" width="3" height="958" fill="#000" />
          <rect x="1161" y="27" width="3" height="958" fill="#000" />
          <rect v-for="s in sessions" :key="s[0]" :x="s[0]" y="27" :width="s[1]" height="958" :fill="s[2]" />

          <path :d="paths.whiteWick + paths.whiteBody" fill="#fff" />
          <path :d="paths.redWick + paths.redBody" fill="#ff6464" />
          <path :d="paths.redCore" fill="#dc2828" />
        </g>

        <polyline :points="maFast" class="ma" stroke-width="2" />
        <polyline :points="maSlow" class="ma" stroke-width="4" />

        <g class="crisp">
          <rect x="35" y="490" width="2093" height="1" fill="#ff0000" />
          <rect v-for="l in levels" :key="l[2]" :x="l[0]" :y="l[2] - 2" :width="l[1] - l[0]" height="4" fill="#00ffff" />
          <rect x="1484" y="231" width="302" height="5" fill="#ff0000" />
        </g>
        <path v-for="a in upArrows" :key="a.join()" :transform="`translate(${a[0]} ${a[1]})`" d="M0 0l6 7h-3v8h-6v-8h-3z" fill="#00ff00" stroke="#00a000" />
        <path v-for="a in downArrows" :key="a.join()" :transform="`translate(${a[0]} ${a[1]})`" d="M-3 0h6v8h3l-6 7l-6-7h3z" fill="#ff0000" stroke="#a00000" />
        <text class="open" x="712" y="769">Open</text>
        <text class="open" x="1635" y="239">Open</text>
        <text class="brand" x="37" y="983">ProRealTime.com - Temps Réel</text>
        <text class="label" x="2092" y="487" fill="#ff0000">R1 M</text>

        <g class="crisp">
          <path :d="histUp" fill="#00ff00" />
          <path :d="histDown" fill="#ff0000" />
        </g>
        <polyline :points="signalLine" class="osc" stroke="#ff0000" />
        <polyline :points="macdLine" class="osc" stroke="#40b8ff" />
        <g class="crisp">
          <rect x="35" y="1149" width="2093" height="1" fill="#ffff00" />
          <rect x="35" y="985" width="2094" height="1" fill="#78909a" />
          <rect x="2129" y="985" width="71" height="1" fill="#203438" />
          <rect x="35" y="1273" width="2094" height="1" fill="#78909a" />
          <rect x="2128" y="27" width="1" height="1247" fill="#78909a" />
          <rect x="2200" y="27" width="1" height="1267" fill="#3c5866" />
        </g>

        <g class="crisp">
          <rect x="35" y="986" width="254" height="19" fill="#78909a" />
          <rect x="35" y="986" width="253" height="18" fill="#cddde4" />
          <rect x="38" y="989" width="4" height="13" fill="#00ff00" />
          <rect x="42" y="989" width="4" height="13" fill="#ff0000" />
          <rect x="46" y="989" width="4" height="13" fill="#40b8ff" />
        </g>
        <text class="label" x="53" y="999" fill="#000">MACD (12 26 9)</text>
        <text class="label" x="151" y="999" fill="#00ff00">0,0298</text>
        <text class="label" x="195" y="999" fill="#ff0000">-0,2292</text>
        <text class="label" x="243" y="999" fill="#40b8ff">-0,1994</text>

        <g v-for="p in prices" :key="'p' + p.v">
          <rect class="tick" x="2129" :y="p.y - 1" width="4" height="1" />
          <text class="label axis" x="2134" :y="p.y + 3">{{ priceLabel(p.v) }}</text>
        </g>
        <g v-for="m in macdScale" :key="'m' + m.v">
          <rect class="tick" x="2129" :y="m.y - 1" width="4" height="1" />
          <text v-if="m.v !== 0" class="label axis" x="2134" :y="m.v === 6 ? m.y + 9 : m.y + 3">{{ m.v }}</text>
        </g>
        <g v-for="t in times" :key="'t' + t.x">
          <rect class="tick" :x="t.x" y="1274" width="1" height="3" />
          <text class="label axis" text-anchor="middle" :x="t.x" y="1289">{{ t.t }}</text>
        </g>

        <defs>
          <linearGradient id="gold" x2="0" y2="1"><stop stop-color="#ffe22e" /><stop offset="1" stop-color="#e8b000" /></linearGradient>
          <linearGradient id="dark" x2="0" y2="1"><stop stop-color="#3a3a3a" /><stop offset="1" stop-color="#080808" /></linearGradient>
        </defs>
        <g v-for="t in tags" :key="t.t">
          <rect x="2133" :y="t.y" :width="t.w" height="18" fill="#78909a" />
          <rect x="2134" :y="t.y + 1" :width="t.w - 2" height="16" fill="url(#dark)" />
          <text class="label" x="2135" :y="t.y + 14" :fill="t.c">{{ t.t }}</text>
        </g>
        <rect x="2133" y="348" width="67" height="25" fill="#78909a" />
        <rect x="2134" y="349" width="65" height="23" fill="url(#gold)" />
        <text class="label" x="2134" y="368" fill="#000">1 95<tspan class="big">5,14</tspan></text>
        <rect x="2134" y="373" width="23" height="17" fill="#98f098" />
        <text class="label" x="2134" y="386" fill="#000">45s</text>
      </svg>
    </div>

    <footer class="bottombar">
      <button v-for="b in bottomLeft" :key="b.name" :class="['bicon', b.cls]" :style="{ width: b.w + 'px' }" :aria-label="b.name">
        <svg width="28" height="25" v-html="b.g" />
      </button>
      <button class="tab">
        <svg width="22" height="22"><path d="M9 1H1v20h8v-3H6V4h3z" fill="#1c5c86" /><path d="M13 1h8v20h-8v-3h3V4h-3z" fill="#9a9a9a" /></svg>
        <span>Analyser</span>
      </button>
      <button v-for="b in bottomMid" :key="b.name" class="bicon" :style="{ width: b.w + 'px' }" :aria-label="b.name">
        <svg width="28" height="25" v-html="b.g" />
      </button>
      <button class="bicon rewind" aria-label="Reculer"><svg width="11" height="11"><path d="M5 1L1 5l4 5M10 1L6 5l4 5" fill="none" stroke="#333" stroke-width="1" /></svg></button>
      <div class="scroll">
        <button class="step" aria-label="Précédent"><svg width="6" height="8"><path d="M5 1L2 4l3 3" /></svg></button>
        <div class="track"><div class="thumb"></div></div>
        <button class="step" aria-label="Suivant"><svg width="6" height="8"><path d="M1 1l3 3-3 3" /></svg></button>
      </div>
      <button v-for="b in bottomRight" :key="b.name" class="bicon right" :aria-label="b.name">
        <svg width="28" height="25" v-html="b.g" />
      </button>
    </footer>
  </div>
</template>

<style>
body {
  background: #000;
}
</style>

<style scoped>
.app {
  display: flex;
  flex-direction: column;
  font: bold 13px/16px "Liberation Sans", Arial, sans-serif;
  color: #000;
}
button {
  display: flex;
  align-items: center;
  justify-content: center;
  margin: 0;
  padding: 0;
  border: 0;
  background: none;
  color: inherit;
  font: inherit;
}
svg {
  flex: none;
}
.topbar {
  box-sizing: border-box;
  display: flex;
  height: 27px;
  border-bottom: 1px solid #4c6670;
  background: linear-gradient(#b6d6e4, #9bbac6);
}
.cell {
  box-sizing: border-box;
  flex: none;
  border-right: 1px solid #6c8a98;
}
.demo {
  width: 35px;
}
.link {
  width: 20px;
}
.pick {
  display: flex;
  align-items: center;
  padding: 0 4px 3px 6px;
}
.pick-symbol {
  width: 76px;
  padding-right: 6px;
  padding-left: 4px;
}
.pick-time {
  width: 84px;
}
.pick-units {
  width: 83px;
}
select {
  flex: 1;
  min-width: 0;
  height: 16px;
  padding: 0;
  border: 0;
  appearance: none;
  background: none;
  color: inherit;
  font: inherit;
}
.chev {
  width: 8px;
  height: 6px;
  fill: none;
  stroke: #111;
  stroke-width: 2;
}
.indicators {
  width: 109px;
  gap: 4px;
}
.indicators span {
  padding-bottom: 3px;
}
.more {
  width: 16px;
}
.quote {
  display: flex;
  flex: 1;
  align-items: center;
  padding: 0 0 3px 7px;
  white-space: nowrap;
}
.quote > * {
  flex: none;
}
.info {
  width: 14px;
  height: 14px;
  margin-right: 7px;
  border: 1px solid #8fa4ae;
  background: #e8eef0;
  color: #7d929c;
  font: bold 11px/12px "Liberation Serif", serif;
  box-sizing: border-box;
}
.instrument {
  box-sizing: border-box;
  width: 135px;
  padding: 0 2px;
  border: 1px solid #34454d;
  border-radius: 3px;
  background: #5c7078;
  color: #fff;
}
.last {
  box-sizing: border-box;
  width: 58px;
  padding-left: 4px;
  color: #a00018;
}
.drop {
  box-sizing: border-box;
  width: 35px;
  margin-right: 4px;
  border: 1px solid #d83c3c;
  border-radius: 2px;
  background: #f05454;
  color: #fff;
  text-align: center;
}
.drop.wide {
  width: 49px;
}
.dir {
  margin: 0 6px 0 2px;
}
.stat {
  width: 54px;
}
.volume {
  width: 36px;
}
.clock {
  width: 54px;
}
.dot {
  width: 8px;
  height: 8px;
  border: 2px solid #d4e4d0;
  border-radius: 50%;
  background: #4ca000;
}
.swap {
  width: 29px;
  border-left: 1px solid #6c8a98;
}
.win {
  display: flex;
  gap: 6px;
  padding: 0 7px 2px 5px;
}
.win svg {
  fill: none;
  stroke: #6f8c99;
}
.body {
  display: flex;
}
.side {
  box-sizing: border-box;
  display: flex;
  flex: none;
  flex-direction: column;
  width: 35px;
  border-right: 1px solid #5c7480;
  background: #9bbac6;
}
.fold {
  flex: none;
  height: 15px;
  border-bottom: 1px solid #6c8a98;
  background: linear-gradient(90deg, #a6c6d2, #9bbac6);
}
.fold.low {
  border-top: 1px solid #6c8a98;
  background: linear-gradient(#b8dae6, #9bbac6);
}
.tools {
  flex: 1 1 0;
  min-height: 0;
  overflow: hidden;
  padding-top: 2px;
}
.tool {
  box-sizing: border-box;
  width: 30px;
  height: 30px;
  margin-left: 2px;
  border: 1px solid transparent;
  border-radius: 3px;
}
.tool.on {
  border-color: #74899a;
  background: #91a7b3;
}
.config {
  flex: none;
  height: 42px;
}
.dots {
  flex: none;
  height: 29px;
}
.chart {
  display: block;
  flex: 1;
  min-width: 0;
  font-family: "Liberation Sans", Arial, sans-serif;
}
.crisp {
  shape-rendering: crispEdges;
}
.ma {
  fill: none;
  stroke: #cc00cc;
  stroke-linejoin: round;
}
.osc {
  fill: none;
  stroke-width: 2;
  stroke-linejoin: round;
}
.open {
  fill: #ffff00;
  font-size: 20px;
  font-weight: bold;
  text-anchor: middle;
}
.brand {
  fill: #c0c0c0;
  font-size: 10px;
  font-weight: normal;
}
.label {
  font-size: 13px;
  font-weight: bold;
}
.axis {
  fill: #c4c8cc;
}
.big {
  font-size: 20px;
}
.tick {
  fill: #78909a;
}
.bottombar {
  box-sizing: border-box;
  display: flex;
  align-items: center;
  height: 29px;
  border-top: 1px solid #5c7480;
  background: #9bbac6;
}
.bicon {
  flex: none;
  height: 28px;
}
.pressed {
  background: #8ba5b2;
}
.tab {
  flex: none;
  width: 90px;
  height: 28px;
  gap: 6px;
  background: linear-gradient(#fff, #e6eaec);
}
.rewind {
  width: 22px;
}
.scroll {
  box-sizing: border-box;
  display: flex;
  flex: 1;
  height: 18px;
  margin-right: 5px;
  border: 1px solid #6c8a98;
}
.step {
  width: 18px;
  background: linear-gradient(#b8dae6, #9bbac6);
}
.step svg {
  fill: none;
  stroke: #000;
  stroke-width: 2;
}
.track {
  flex: 1;
  border: solid #6c8a98;
  border-width: 0 1px;
}
.thumb {
  box-sizing: border-box;
  width: 38%;
  height: 16px;
  margin-left: 61%;
  border: solid #6c8a98;
  border-width: 0 1px;
  background: linear-gradient(#c0e0ea, #9bbac6);
}
.right {
  width: 30px;
}
</style>
